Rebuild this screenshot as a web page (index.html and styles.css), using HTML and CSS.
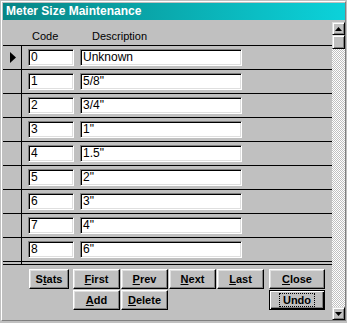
FILE: index.html
```html
<!DOCTYPE html>
<html lang="en">
<head>
  <meta charset="UTF-8">
  <title>Meter Size Maintenance</title>
  <link rel="stylesheet" href="styles.css">
</head>
<body>
<div class="window">
  <div class="frame">
    <div class="titlebar">Meter Size Maintenance</div>
    <div class="client">
      <div class="form">
        <div class="form-header">
          <span class="label label-code">Code</span>
          <span class="label label-desc">Description</span>
        </div>
        <div class="detail">
          <div class="row">
            <div class="selector">
              <svg width="6" height="11" viewBox="0 0 6 11"><path d="M0 0 L6 5.5 L0 11 Z" fill="#000"/></svg>
            </div>
            <div class="field field-code">0</div>
            <div class="field field-desc">Unknown</div>
          </div>
          <div class="row">
            <div class="selector"></div>
            <div class="field field-code">1</div>
            <div class="field field-desc">5/8"</div>
          </div>
          <div class="row">
            <div class="selector"></div>
            <div class="field field-code">2</div>
            <div class="field field-desc">3/4"</div>
          </div>
          <div class="row">
            <div class="selector"></div>
            <div class="field field-code">3</div>
            <div class="field field-desc">1"</div>
          </div>
          <div class="row">
            <div class="selector"></div>
            <div class="field field-code">4</div>
            <div class="field field-desc">1.5"</div>
          </div>
          <div class="row">
            <div class="selector"></div>
            <div class="field field-code">5</div>
            <div class="field field-desc">2"</div>
          </div>
          <div class="row">
            <div class="selector"></div>
            <div class="field field-code">6</div>
            <div class="field field-desc">3"</div>
          </div>
          <div class="row">
            <div class="selector"></div>
            <div class="field field-code">7</div>
            <div class="field field-desc">4"</div>
          </div>
          <div class="row">
            <div class="selector"></div>
            <div class="field field-code">8</div>
            <div class="field field-desc">6"</div>
          </div>
          <div class="row row-partial">
            <div class="selector"></div>
          </div>
        </div>
        <div class="form-footer">
          <div class="btn btn-stats"><span>S<u>t</u>ats</span></div>
          <div class="btn"><span><u>F</u>irst</span></div>
          <div class="btn"><span><u>P</u>rev</span></div>
          <div class="btn"><span><u>N</u>ext</span></div>
          <div class="btn"><span><u>L</u>ast</span></div>
          <div class="btn btn-close"><span><u>C</u>lose</span></div>
          <div class="btn btn-add"><span><u>A</u>dd</span></div>
          <div class="btn"><span><u>D</u>elete</span></div>
          <div class="btn btn-close btn-default"><span class="focus">Undo</span></div>
        </div>
      </div>
      <div class="scrollbar">
        <div class="sb-btn">
          <svg width="7" height="4" viewBox="0 0 7 4"><path d="M3.5 0 L7 4 L0 4 Z" fill="#000"/></svg>
        </div>
        <div class="sb-thumb"></div>
        <div class="sb-track"></div>
        <div class="sb-btn">
          <svg width="7" height="4" viewBox="0 0 7 4"><path d="M0 0 L7 0 L3.5 4 Z" fill="#000"/></svg>
        </div>
      </div>
    </div>
  </div>
</div>
</body>
</html>
```

FILE: styles.css
```css
body {
  margin: 0;
  background-color: #c0c0c0;
  font-family: 'Liberation Sans', Arial, sans-serif;
  color: #000;
}
.window {
  width: 347px;
  height: 323px;
  box-sizing: border-box;
  padding: 1px 1px 2px 1px;
  background-color: #c0c0c0;
}
.frame {
  height: 100%;
  box-sizing: border-box;
  border: 1px solid;
  border-color: #fff #808080 #808080 #fff;
  padding: 1px 0 0 1px;
  display: flex;
  flex-direction: column;
}
.titlebar {
  height: 17px;
  line-height: 17px;
  padding-left: 3px;
  background: linear-gradient(90deg, #088585, #0cd2da);
  color: #fff;
  font-weight: bold;
  font-size: 12px;
  white-space: nowrap;
}
.client {
  flex: 1;
  display: flex;
  min-height: 0;
}
.form {
  flex: 1;
  display: flex;
  flex-direction: column;
}
.form-header {
  height: 25px;
  border-bottom: 1px solid #000;
  position: relative;
  font-size: 11px;
}
.label {
  position: absolute;
  top: 10px;
  line-height: 13px;
}
.label-code { left: 29px; }
.label-desc { left: 89px; }

.detail {
  height: 218px;
  overflow: hidden;
  border-bottom: 1px solid #000;
}
.row {
  display: flex;
  height: 23px;
  border-bottom: 1px solid #000;
}
.selector {
  width: 18px;
  border-right: 1px solid #000;
  display: flex;
  align-items: center;
  justify-content: center;
}
.selector svg {
  margin-left: 2px;
}
.field {
  box-sizing: border-box;
  height: 17px;
  margin-top: 3px;
  margin-left: 6px;
  padding: 1px 0 0 2px;
  background-color: #fff;
  border: 1px solid;
  border-color: #808080 #fff #fff #808080;
  box-shadow: inset 1px 1px #000, inset -1px -1px #dfdfdf;
  font-size: 12px;
  line-height: 13px;
  white-space: nowrap;
  overflow: hidden;
}
.field-code { width: 46px; }
.field-desc { width: 162px; }

.form-footer {
  flex: 1;
  padding: 4px 0 0 26px;
  display: grid;
  grid-template-columns: 43px 47px 47px 47px 47px 60px;
  grid-auto-rows: 20px;
  column-gap: 1px;
  row-gap: 1px;
  align-content: start;
}
.btn {
  box-sizing: border-box;
  height: 20px;
  border: 1px solid;
  border-color: #fff #000 #000 #fff;
  box-shadow: inset -1px -1px #808080, inset 1px 1px #dfdfdf;
  display: flex;
  align-items: center;
  justify-content: center;
  font-size: 11px;
  line-height: 13px;
  font-weight: bold;
  background-color: #c0c0c0;
}
.btn-stats { width: 40px; }
.btn-close {
  width: 56px;
  justify-self: end;
}
.btn-add { grid-column: 2; }
.btn-default {
  grid-column: 6;
  border-color: #000;
  box-shadow: inset 1px 1px #fff, inset -1px -1px #000, inset -2px -2px #808080;
}
.focus {
  outline: 1px dotted #000;
  padding: 0 3px;
  line-height: 12px;
}

.scrollbar {
  width: 13px;
  margin-top: 2px;
  display: flex;
  flex-direction: column;
}
.sb-btn, .sb-thumb {
  box-sizing: border-box;
  height: 13px;
  background-color: #c0c0c0;
  border: 1px solid;
  border-color: #dfdfdf #000 #000 #dfdfdf;
  box-shadow: inset 1px 1px #fff, inset -1px -1px #808080;
  display: flex;
  align-items: center;
  justify-content: center;
}
.sb-thumb { height: 14px; }
.sb-track {
  flex: 1;
  background: repeating-conic-gradient(#c0c0c0 0% 25%, #fff 0% 50%) 0 0 / 2px 2px;
}
```
